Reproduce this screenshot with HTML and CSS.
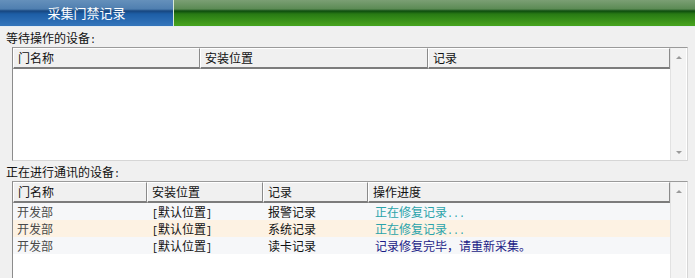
FILE: index.html
```html
<!DOCTYPE html>
<html lang="zh">
<head>
<meta charset="utf-8">
<link rel="stylesheet" href="styles.css">
</head>
<body>
<div class="topbar">
  <div class="tab">采集门禁记录</div>
  <div class="green"></div>
</div>
<div class="content">
  <div class="label">等待操作的设备<span class="asc">:</span></div>
  <div class="listbox lb1">
    <div class="listmain">
      <div class="header">
        <div class="hc" style="width:187px">门名称</div>
        <div class="hc" style="width:228px">安装位置</div>
        <div class="hc" style="width:242px">记录</div>
      </div>
    </div>
    <div class="scrollbar">
      <div class="arrow up"></div>
      <div class="arrow down"></div>
    </div>
  </div>
  <div class="label">正在进行通讯的设备<span class="asc">:</span></div>
  <div class="listbox lb2">
    <div class="listmain">
      <div class="header">
        <div class="hc" style="width:134px">门名称</div>
        <div class="hc" style="width:116px">安装位置</div>
        <div class="hc" style="width:105px">记录</div>
        <div class="hc" style="width:302px">操作进度</div>
      </div>
      <div class="row odd">
        <div class="c c1 dept">开发部</div>
        <div class="c c2"><span class="asc">[</span>默认位置<span class="asc">]</span></div>
        <div class="c c3">报警记录</div>
        <div class="c c4 busy">正在修复记录<span class="asc">...</span></div>
      </div>
      <div class="row even">
        <div class="c c1 dept">开发部</div>
        <div class="c c2"><span class="asc">[</span>默认位置<span class="asc">]</span></div>
        <div class="c c3">系统记录</div>
        <div class="c c4 busy">正在修复记录<span class="asc">...</span></div>
      </div>
      <div class="row odd">
        <div class="c c1 dept">开发部</div>
        <div class="c c2"><span class="asc">[</span>默认位置<span class="asc">]</span></div>
        <div class="c c3">读卡记录</div>
        <div class="c c4 done">记录修复完毕，请重新采集。</div>
      </div>
    </div>
    <div class="scrollbar">
      <div class="arrow up"></div>
    </div>
  </div>
</div>
</body>
</html>
```
FILE: styles.css
```css
html, body {
  margin: 0;
  padding: 0;
  background: #f0f0f0;
  font-family: "Noto Sans CJK SC", "Noto Sans", sans-serif;
  font-size: 12px;
  color: #111;
  overflow: hidden;
}
.asc {
  font-family: "Liberation Mono", monospace;
  font-size: 10px;
}
.topbar {
  display: flex;
  height: 26px;
  border-bottom: 1px solid #e4ecf3;
}
.tab {
  width: 173px;
  border-right: 1px solid #d8e8d8;
  background: linear-gradient(#6590bb 0, #4f7fb0 9px, #17467f 11px, #1d5ea6 14px, #3374ba 25px);
  color: #fff;
  font-size: 13px;
  line-height: 26px;
  text-align: center;
}
.green {
  flex: 1;
  background: linear-gradient(#7b9f74 0, #5c8b55 9px, #0d4c0e 11px, #287a14 14px, #46a21e 25px);
}
.content {
  padding: 0 8px 0 12px;
}
.label {
  height: 20px;
  line-height: 21px;
  margin-left: -6px;
}
.listbox {
  display: flex;
  width: 674px;
  border: 1px solid #9a9a9a;
  border-color: #9a9a9a #d6d6d6 #d6d6d6 #8c8c8c;
  background: #fff;
}
.lb1 { height: 112px; }
.lb2 { height: 120px; }
.listmain {
  width: 657px;
  display: flex;
  flex-direction: column;
}
.header {
  display: flex;
  height: 21px;
}
.hc {
  box-sizing: border-box;
  background: #f0f0f0;
  border-left: 1px solid #fff;
  border-top: 1px solid #fff;
  border-right: 1px solid #8a8a8a;
  border-bottom: 2px solid #7c7c7c;
  padding-left: 4px;
  line-height: 18px;
}
.scrollbar {
  width: 16px;
  background: #f3f3f3;
  border-left: 1px solid #e2e2e2;
  display: flex;
  flex-direction: column;
  justify-content: space-between;
  align-items: center;
  padding: 8px 0 6px;
  box-sizing: border-box;
}
.arrow {
  width: 0;
  height: 0;
  border-left: 3px solid transparent;
  border-right: 3px solid transparent;
}
.arrow.up { border-bottom: 3px solid #9a9a9a; }
.arrow.down { border-top: 3px solid #9a9a9a; }
.row {
  display: flex;
  height: 17px;
  line-height: 18px;
}
.row.odd { background: #f6f7f9; }
.row.even { background: #fdf2e3; }
.c { padding-left: 4px; box-sizing: border-box; white-space: nowrap; }
.c1 { width: 134px; }
.c2 { width: 116px; padding-left: 5px; }
.c3 { width: 105px; padding-left: 5px; }
.c4 { width: 302px; padding-left: 7px; }
.dept { color: #4a4a4a; }
.busy { color: #2aa3aa; }
.done { color: #1b1b86; }
```
